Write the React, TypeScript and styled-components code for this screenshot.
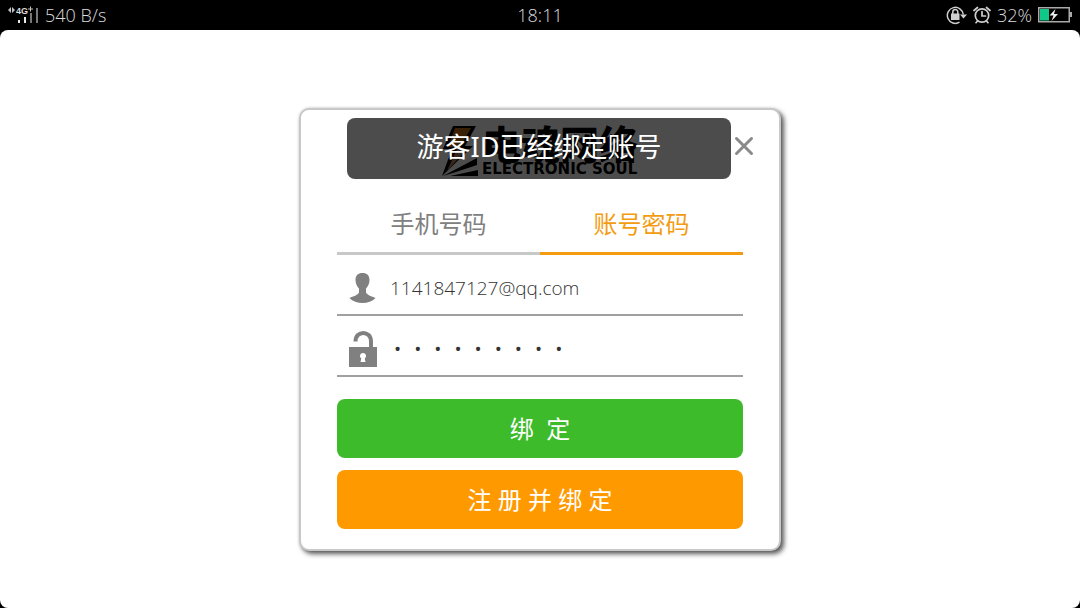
import React, { useState } from "react";
import styled, { createGlobalStyle } from "styled-components";

const latin = `"Noto Sans", "Open Sans"`;
const cjk = `"Noto Sans CJK SC", sans-serif`;

const GlobalStyle = createGlobalStyle`
  *, *::before, *::after { box-sizing: border-box; }
  body { margin: 0; background: #000; font-family: ${latin}, ${cjk}; }
  button, input { font-family: inherit; border: 0; padding: 0; background: none; }
`;

const Screen = styled.div`
  min-height: 100vh;
  display: flex;
  flex-direction: column;
  background: #000;
`;

const StatusBar = styled.header`
  display: grid;
  grid-template-columns: 1fr auto 1fr;
  align-items: center;
  height: 30px;
  padding: 0 8px;
  color: #dcdcdc;
  font-family: "Open Sans", ${cjk};
  font-size: 18px;
  font-weight: 300;
  line-height: 24px;
`;

const StatusGroup = styled.div<{ $end?: boolean }>`
  display: flex;
  align-items: center;
  gap: 6px;
  justify-content: ${(p) => (p.$end ? "flex-end" : "flex-start")};
  svg { display: block; flex: none; }
`;

const Stage = styled.main`
  flex: 1;
  display: flex;
  justify-content: center;
  align-items: flex-start;
  padding: 78px 16px 56px;
  background: #fff;
  border-radius: 8px;
`;

const Dialog = styled.section`
  position: relative;
  width: 100%;
  max-width: 482px;
  padding: 8px 36px 20px;
  background: #fff;
  border: 2px solid #c8c8c8;
  border-radius: 10px;
  box-shadow: 3px 3px 5px 0 rgba(0, 0, 0, 0.65), 0 0 3px rgba(0, 0, 0, 0.15);
`;

const DialogHeader = styled.div`
  display: flex;
  justify-content: center;
  align-items: center;
  height: 62px;
  padding-top: 4px;
`;

const Brand = styled.div`
  display: flex;
  align-items: center;
  gap: 2px;
  color: #000;
`;

const BrandText = styled.div`
  display: flex;
  flex-direction: column;
`;

const BrandName = styled.span`
  font-family: ${cjk};
  font-size: 39px;
  font-weight: 900;
  line-height: 36px;
`;

const BrandSub = styled.span`
  font-family: "DejaVu Sans", sans-serif;
  font-size: 15px;
  font-weight: 700;
  line-height: 18px;
  white-space: nowrap;
`;

const Toast = styled.div`
  position: absolute;
  top: 8px;
  left: 46px;
  right: 48px;
  height: 61px;
  padding-bottom: 3px;
  display: flex;
  align-items: center;
  justify-content: center;
  border-radius: 8px;
  background: rgba(0, 0, 0, 0.7);
  color: #fff;
  font-size: 27px;
  line-height: 36px;
`;

const CloseButton = styled.button`
  position: absolute;
  top: 26px;
  right: 25px;
  width: 20px;
  height: 20px;
  cursor: pointer;
  svg { display: block; }
`;

const Tabs = styled.div`
  display: grid;
  grid-template-columns: 1fr 1fr;
  margin-top: 18px;
`;

const Tab = styled.button<{ $active: boolean }>`
  height: 57px;
  padding-bottom: 2px;
  border-bottom: 3px solid ${(p) => (p.$active ? "#f39c12" : "#c8c8c8")};
  color: ${(p) => (p.$active ? "#f39c12" : "#808080")};
  font-size: 24px;
  line-height: 32px;
  cursor: pointer;
`;

const Field = styled.label`
  display: flex;
  align-items: center;
  gap: 12px;
  height: 61px;
  padding: 6px 0 0 11px;
  border-bottom: 2px solid #a0a0a0;
  svg { display: block; flex: none; }
`;

const Input = styled.input`
  flex: 1;
  min-width: 0;
  height: 32px;
  color: #333;
  font-family: "Open Sans", ${cjk};
  font-size: 19px;
  font-weight: 300;
  outline: none;

  &[type="password"] {
    padding-left: 4px;
    font-size: 19px;
    font-weight: 400;
    letter-spacing: 13px;
  }
`;

const Actions = styled.div`
  display: flex;
  flex-direction: column;
  gap: 12px;
  margin-top: 22px;
`;

const ActionButton = styled.button<{ $color: string }>`
  height: 59px;
  border-radius: 8px;
  background: ${(p) => p.$color};
  color: #fff;
  font-size: 24px;
  line-height: 32px;
  white-space: pre;
  cursor: pointer;
`;

const SignalIcon = () => (
  <svg width="31" height="20" viewBox="0 0 31 20" aria-hidden="true">
    <path d="M0 5l3-3v6zM7 5L4 2v6z" fill="#c4c4c4" />
    <text x="8" y="9" fontSize="9" fontWeight="700" fontFamily="Liberation Sans" fill="#dcdcdc">4G</text>
    <path d="M20 4h5M22.500 1.500v5" stroke="#c4c4c4" />
    <path d="M10 15h2v3h-2zM16 12h2v6h-2z" fill="#e8e8e8" />
    <path d="M22 8h2v10h-2zM28 3h2v15h-2z" fill="#777" />
  </svg>
);

const RotationLockIcon = () => (
  <svg width="21" height="20" viewBox="0 0 21 20" fill="none" stroke="#cfcfcf" aria-hidden="true">
    <path d="M13.500 17.200A8 8 0 1 1 17.300 9.500" strokeWidth="1.500" />
    <path d="M14 9.500h7l-3.500 4z" fill="#cfcfcf" stroke="none" />
    <path d="M5 8.500h8.500v6.500H5z" fill="#cfcfcf" stroke="none" />
    <path d="M6.800 9V7a2.500 2.500 0 0 1 5 0v2" strokeWidth="1.500" />
  </svg>
);

const AlarmIcon = () => (
  <svg width="18" height="18" viewBox="0 0 18 18" fill="none" stroke="#cfcfcf" strokeWidth="1.700" strokeLinecap="round" aria-hidden="true">
    <circle cx="9" cy="9.500" r="6.700" />
    <path d="M9 5.500v4.500h3.500M1 4.500L4.500 1.500M17 4.500L13.500 1.500M4.500 15L3 16.700M13.500 15l1.500 1.700" />
  </svg>
);

const BatteryIcon = () => (
  <svg width="34" height="16" viewBox="0 0 34 16" aria-hidden="true">
    <rect x="0.750" y="0.750" width="30.500" height="14" fill="none" stroke="#aaa" strokeWidth="1.500" />
    <path d="M32 5h2v5h-2z" fill="#aaa" />
    <path d="M2 2h9v11.500H2z" fill="#10c888" />
    <path d="M17.500 2l-6 6.500h4l-2 5.500 6.500-7h-4z" fill="#eee" />
  </svg>
);

const BoltLogo = () => (
  <svg width="38" height="52" viewBox="0 0 38 52" aria-hidden="true">
    <path d="M11 1h23L23 21h8L0 51l10-27H1z" fill="#000" />
    <path d="M13 3h16L18 22H6z" fill="#c06c10" />
    <path d="M15 24h10L5 46z" fill="#b8805a" />
    <path d="M1 51l34-18v7L14 47zM8 51l28-6v6z" fill="#000" />
  </svg>
);

const CloseIcon = () => (
  <svg width="20" height="20" viewBox="0 0 20 20" aria-hidden="true">
    <path d="M2.500 2.500l15 15M17.500 2.500l-15 15" stroke="#8a8a8a" strokeWidth="3" strokeLinecap="round" />
  </svg>
);

const UserIcon = () => (
  <svg width="30" height="32" viewBox="0 0 30 32" aria-hidden="true">
    <path d="M14.500 1C10 1 7.500 3.500 7.500 8c0 4 1.800 6.500 3.500 8.500v4c-1.500 3-5.500 3.500-9.500 5.500 3 3.200 8 5 13 5s10-1.800 13-5c-4-2-8-2.500-9.500-5.500v-4c1.700-2 3.500-4.500 3.500-8.500 0-4.500-2.500-7-7-7z" fill="#808080" />
  </svg>
);

const UnlockIcon = () => (
  <svg width="30" height="38" viewBox="0 0 30 38" aria-hidden="true">
    <path d="M7.500 11.500C7.500 0 23 0 23 11.500V18" fill="none" stroke="#808080" strokeWidth="4" />
    <path fillRule="evenodd" d="M1 17h28v20H1zM15 23a3 3 0 0 0-1.700 5.500L12.500 32h5l-.8-3.500A3 3 0 0 0 15 23z" fill="#808080" />
  </svg>
);

type TabKey = "phone" | "account";

export default function App() {
  const [tab, setTab] = useState<TabKey>("account");
  const [account, setAccount] = useState("1141847127@qq.com");
  const [password, setPassword] = useState("123456789");

  return (
    <>
      <GlobalStyle />
      <Screen>
        <StatusBar>
          <StatusGroup>
            <SignalIcon />
            <span>540 B/s</span>
          </StatusGroup>
          <span>18:11</span>
          <StatusGroup $end>
            <RotationLockIcon />
            <AlarmIcon />
            <span>32%</span>
            <BatteryIcon />
          </StatusGroup>
        </StatusBar>
        <Stage>
          <Dialog role="dialog" aria-label="游客ID已经绑定账号">
            <DialogHeader>
              <Brand>
                <BoltLogo />
                <BrandText>
                  <BrandName>电魂网络</BrandName>
                  <BrandSub>ELECTRONIC SOUL</BrandSub>
                </BrandText>
              </Brand>
            </DialogHeader>
            <Toast role="status">游客ID已经绑定账号</Toast>
            <CloseButton type="button" aria-label="关闭">
              <CloseIcon />
            </CloseButton>
            <Tabs role="tablist">
              <Tab type="button" role="tab" aria-selected={tab === "phone"} $active={tab === "phone"} onClick={() => setTab("phone")}>
                手机号码
              </Tab>
              <Tab type="button" role="tab" aria-selected={tab === "account"} $active={tab === "account"} onClick={() => setTab("account")}>
                账号密码
              </Tab>
            </Tabs>
            <Field>
              <UserIcon />
              <Input type="text" aria-label="账号" value={account} onChange={(e) => setAccount(e.target.value)} />
            </Field>
            <Field>
              <UnlockIcon />
              <Input type="password" aria-label="密码" value={password} onChange={(e) => setPassword(e.target.value)} />
            </Field>
            <Actions>
              <ActionButton type="button" $color="#3dbb2b">绑  定</ActionButton>
              <ActionButton type="button" $color="#ff9900">注 册 并 绑 定</ActionButton>
            </Actions>
          </Dialog>
        </Stage>
      </Screen>
    </>
  );
}
